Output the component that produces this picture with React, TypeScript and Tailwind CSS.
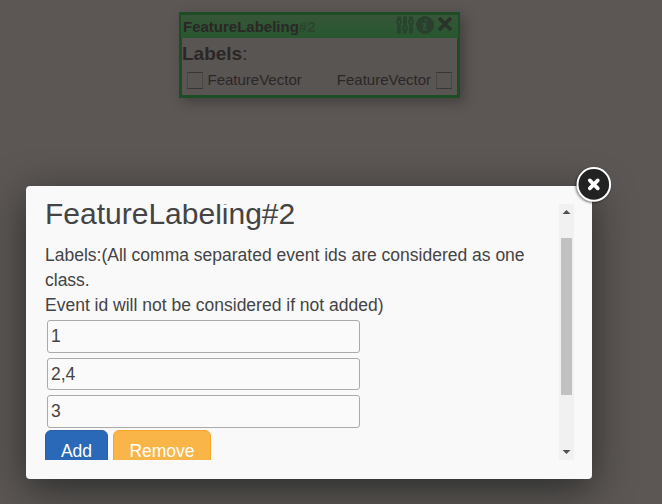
import React, { useState } from "react";

function SlidersIcon() {
  return (
    <svg width="18" height="18" viewBox="0 0 18 18" fill="none" stroke="#29432e" strokeWidth="1.9">
      <path d="M3 .5V3.5M3 8.5V10M3 12V17.5M9 .5V8M9 14.5V17.5M15 .5V3.5M15 8.5V10M15 12V17.5" strokeWidth="3.8" />
      <path d="M3 9V12M9 7V10M15 9V12" strokeWidth="3" />
      <circle cx="3" cy="6" r="2.1" />
      <circle cx="9" cy="12" r="2.1" />
      <circle cx="15" cy="6" r="2.1" />
    </svg>
  );
}

function InfoIcon() {
  return (
    <svg width="18" height="18" viewBox="0 0 18 18">
      <circle cx="9" cy="9" r="9" fill="#2a3f2e" />
      <path d="M6.5 7H10.7L9.6 13H11.5L11.2 14.5H6.5L7.6 8.5H6.3ZM8.7 3.2H11.2L10.7 5.5H8.3Z" fill="#2f5136" />
    </svg>
  );
}

function CrossIcon() {
  return (
    <svg width="16" height="16" viewBox="0 0 16 16" stroke="#29342a" strokeWidth="3.6">
      <path d="M2 2L14 14M14 2L2 14" />
    </svg>
  );
}

function Port() {
  return <span className="h-[17px] w-4 border border-x-[#4b4745] border-y-[#393534]" />;
}

function FeatureNode() {
  return (
    <section className="ml-[179px] h-[86px] w-[281px] border-[3px] border-[#1d4d24] bg-[#595553] text-[#2b2727] shadow-[4px_4px_12px_rgba(0,0,0,0.28)]">
      <header className="-mx-px flex h-[23px] items-start justify-between bg-linear-to-b from-[#375639] to-[#26572f] pr-[5px] pl-[2px]">
        <h2 className="text-[15px] leading-[23px] font-bold">
          FeatureLabeling<span className="text-[#2b4530]">#2</span>
        </h2>
        <div className="flex items-start gap-[2px] pt-px">
          <SlidersIcon />
          <InfoIcon />
          <span className="ml-px">
            <CrossIcon />
          </span>
        </div>
      </header>
      <p className="text-[19px] leading-[31px]">
        <b>Labels</b>:
      </p>
      <div className="flex items-center justify-between pr-[5px] pl-[5px] text-[15px] leading-[22px]">
        <div className="flex items-center gap-[4.5px]">
          <Port />
          <span>FeatureVector</span>
        </div>
        <div className="flex items-center gap-[5px]">
          <span>FeatureVector</span>
          <Port />
        </div>
      </div>
    </section>
  );
}

function Scrollbar() {
  return (
    <div className="flex w-[15px] shrink-0 flex-col items-center bg-[#f1f1f1]">
      <svg className="shrink-0" width="15" height="34" viewBox="0 0 15 34" fill="#505050">
        <path d="M3.5 10L7.5 6L11.5 10Z" />
      </svg>
      <div className="h-[157px] w-[11px] bg-[#c1c1c1]" />
      <svg className="mt-auto shrink-0" width="15" height="15" viewBox="0 0 15 15" fill="#505050">
        <path d="M3.5 5L7.5 9L11.5 5Z" />
      </svg>
    </div>
  );
}

function CloseButton() {
  return (
    <button aria-label="Close" className="absolute -top-[20px] -right-[20px] size-[38px]">
      <svg width="38" height="38" viewBox="0 0 38 38" className="drop-shadow-[-1px_1px_1px_rgba(0,0,0,0.5)]">
        <circle cx="19.8" cy="18.4" r="16.3" fill="#222" stroke="#fff" strokeWidth="2" />
        <path d="M15.8 14.4L23.8 22.4M23.8 14.4L15.8 22.4" stroke="#fff" strokeWidth="3.7" strokeLinecap="round" />
      </svg>
    </button>
  );
}

export default function App() {
  const [labels, setLabels] = useState(["1", "2,4", "3"]);
  return (
    <main className="h-[504px] w-[662px] overflow-hidden bg-[#5c5755] pt-[12px] font-['Liberation_Sans',sans-serif]">
      <FeatureNode />
      <div className="relative mt-[88px] ml-[26px] flex h-[293px] w-[566px] rounded-[4px] bg-[#f9f9f9] pt-[18px] pr-[18px] pb-[19px] pl-[19px] text-[#444] shadow-[0_10px_40px_rgba(5,12,8,0.58)]">
        <div className="h-[256px] flex-1 overflow-hidden">
          <h1 className="-mt-[11px] text-[30px] leading-[42px]">FeatureLabeling#2</h1>
          <p className="mt-[8px] text-[17.5px] leading-[25px]">
            Labels:(All comma separated event ids are considered as one class.
            <br />
            Event id will not be considered if not added)
          </p>
          <div className="mt-[2px] ml-[2px] flex flex-col gap-[5px]">
            {labels.map((label, i) => (
              <input
                key={i}
                value={label}
                onChange={(e) => setLabels(labels.map((l, j) => (j === i ? e.target.value : l)))}
                className="h-[32.5px] w-[313px] rounded-[3px] border border-[#aaa] bg-[#fafafa] px-[3px] pt-[0.5px] text-[17.5px]"
              />
            ))}
          </div>
          <div className="mt-[2px] flex gap-[5px] text-[17.5px] text-white">
            <button className="h-[44px] w-[63px] rounded-[6px] border border-[#2a5ea6] bg-[#2a69b8]" onClick={() => setLabels([...labels, ""])}>
              Add
            </button>
            <button className="h-[44px] w-[98px] rounded-[6px] border border-[#f8a52b] bg-[#f9b547]" onClick={() => setLabels(labels.slice(0, -1))}>
              Remove
            </button>
          </div>
        </div>
        <Scrollbar />
        <CloseButton />
      </div>
    </main>
  );
}
